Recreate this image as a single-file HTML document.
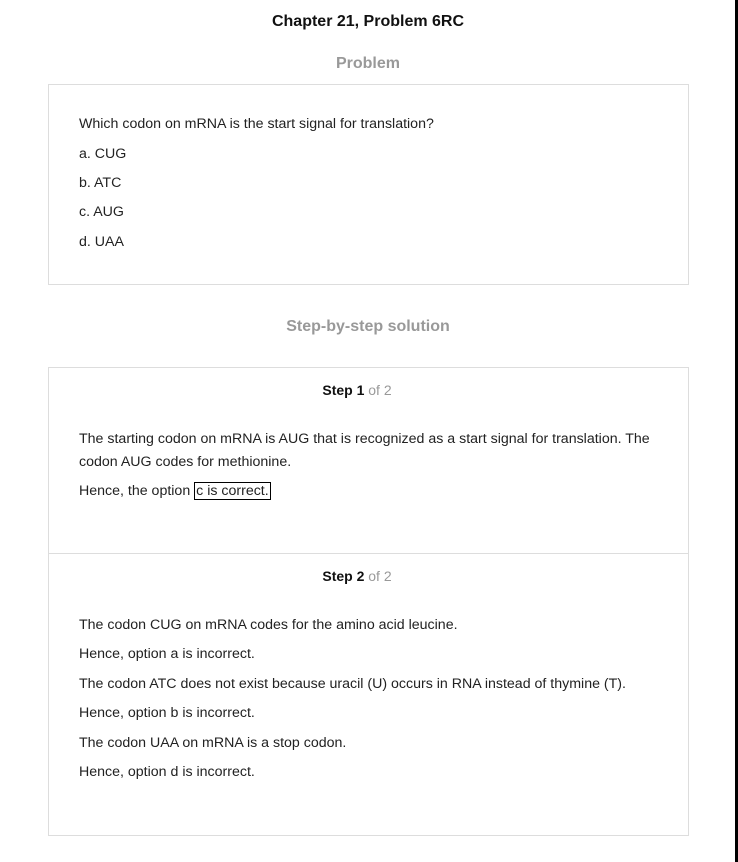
<!DOCTYPE html>
<html><head><style>
body{margin:0;background:#fff;font-family:"Liberation Sans",Arial,sans-serif;color:#222;width:738px;height:862px;position:relative;overflow:hidden}
.bar{position:absolute;left:735px;top:0;width:3px;height:862px;background:#000}
.t{position:absolute;left:0;width:736px;text-align:center;font-weight:bold}
.box{position:absolute;left:48px;width:639px;border:1px solid #ddd}
.p{position:absolute;left:79px;font-size:14.2px;white-space:nowrap;line-height:16px}
.s{position:absolute;left:-11px;width:736px;text-align:center;font-size:14px;line-height:16px}
.s b{color:#111}.s span{color:#999}
.hl{border:1px solid #000;padding:0 1px}
</style></head><body>
<div class="bar"></div>
<div class="t" style="top:13px;font-size:16px;color:#111">Chapter 21, Problem 6RC</div>
<div class="t" style="top:55px;font-size:16px;color:#999">Problem</div>
<div class="box" style="top:84px;height:199px"></div>
<div class="p" style="top:116px">Which codon on mRNA is the start signal for translation?</div>
<div class="p" style="top:146px">a. CUG</div>
<div class="p" style="top:175px">b. ATC</div>
<div class="p" style="top:204px">c. AUG</div>
<div class="p" style="top:234px">d. UAA</div>
<div class="t" style="top:318px;font-size:16px;color:#999">Step-by-step solution</div>
<div class="box" style="top:367px;height:467px"></div>
<div style="position:absolute;left:49px;top:553px;width:639px;height:1px;background:#ddd"></div>
<div class="s" style="top:382px"><b>Step 1</b> <span>of 2</span></div>
<div class="p" style="top:431px">The starting codon on mRNA is AUG that is recognized as a start signal for translation. The</div>
<div class="p" style="top:454px">codon AUG codes for methionine.</div>
<div class="p" style="top:483px">Hence, the option <span class="hl">c is correct.</span></div>
<div class="s" style="top:568px"><b>Step 2</b> <span>of 2</span></div>
<div class="p" style="top:617px">The codon CUG on mRNA codes for the amino acid leucine.</div>
<div class="p" style="top:646px">Hence, option a is incorrect.</div>
<div class="p" style="top:676px">The codon ATC does not exist because uracil (U) occurs in RNA instead of thymine (T).</div>
<div class="p" style="top:705px">Hence, option b is incorrect.</div>
<div class="p" style="top:735px">The codon UAA on mRNA is a stop codon.</div>
<div class="p" style="top:764px">Hence, option d is incorrect.</div>
</body></html>
